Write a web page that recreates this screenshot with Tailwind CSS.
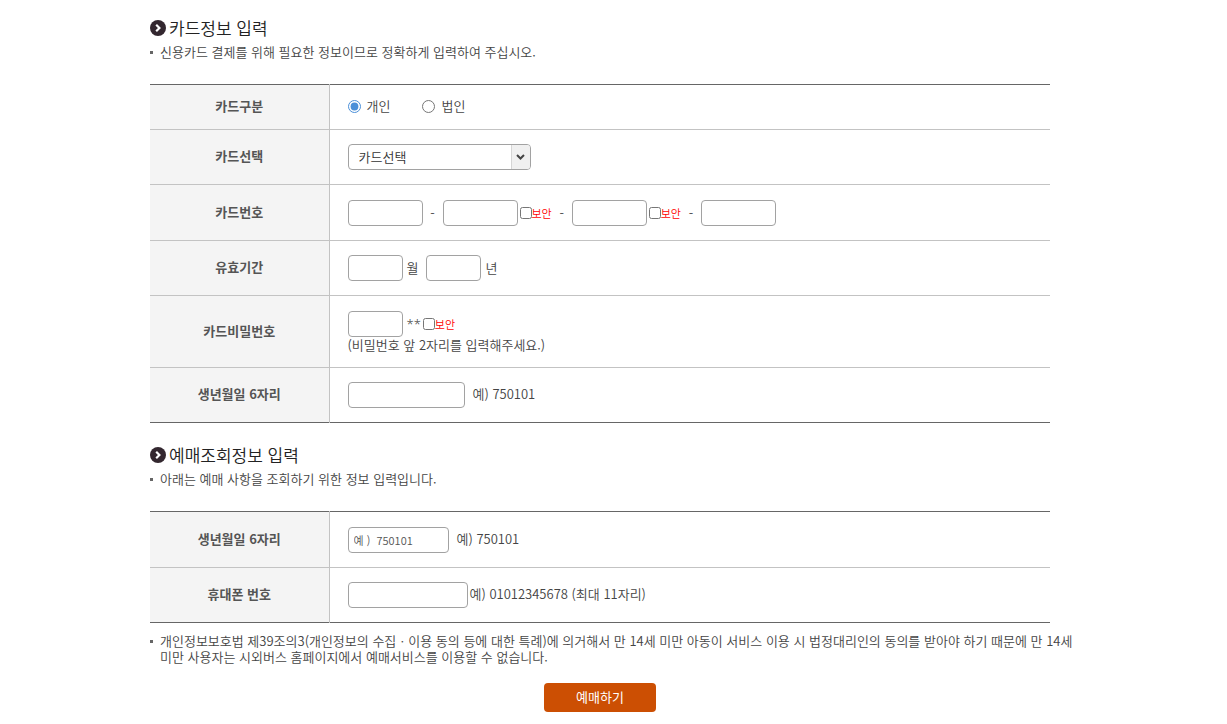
<!DOCTYPE html>
<html lang="ko">
<head>
  <meta charset="UTF-8" />
  <meta name="viewport" content="width=device-width, initial-scale=1.0" />
  <title>카드정보 입력</title>
  <script src="https://cdn.jsdelivr.net/npm/@tailwindcss/browser@4"></script>
</head>
<body class="bg-white font-['Noto_Sans_CJK_KR',sans-serif] text-[13px] leading-4 font-[350] text-[#444]">
  <form class="max-w-[1200px] px-[150px] pt-4 pb-3">

    <!-- 카드정보 -->
    <section>
      <h2 class="flex items-center gap-[3px] text-[17px] leading-6 font-[350] text-[#222]">
        <svg class="size-4" viewBox="0 0 16 16" fill="none"><circle cx="8" cy="8" r="8" fill="#33272f" /><path d="M6.2 4.8 9.4 8l-3.2 3.2" stroke="#fff" stroke-width="2.2" /></svg>
        카드정보 입력
      </h2>
      <p class="mt-1 flex gap-[7px]"><span class="mt-[7px] size-[3px] shrink-0 bg-[#666]"></span>신용카드 결제를 위해 필요한 정보이므로 정확하게 입력하여 주십시오.</p>

      <table class="mt-6 w-full border-y border-[#666]">
        <tbody>
          <tr class="h-[45px] border-b border-[#c3c3c3]">
            <th class="w-[179px] border-r border-[#c3c3c3] bg-[#f4f4f4] pb-0.5 text-[#555]">카드구분</th>
            <td class="px-[18px] pb-0.5">
              <div class="flex items-center gap-8">
                <label class="flex items-center gap-1.5"><input type="radio" name="cardType" checked class="size-[13px] accent-[#4a8fd8]" />개인</label>
                <label class="flex items-center gap-1.5"><input type="radio" name="cardType" class="size-[13px] accent-[#4a8fd8]" />법인</label>
              </div>
            </td>
          </tr>
          <tr class="h-[55px] border-b border-[#c3c3c3]">
            <th class="border-r border-[#c3c3c3] bg-[#f4f4f4] pb-0.5 text-[#555]"><label for="card">카드선택</label></th>
            <td class="px-[18px]">
              <div class="relative w-[183px]">
                <select id="card" class="block h-[26px] w-full appearance-none rounded border border-[#a2a2a2] pl-2.5 text-[#333]">
                  <option>카드선택</option>
                </select>
                <span class="pointer-events-none absolute inset-y-px right-px flex w-[19px] items-center justify-center rounded-r-[3px] border-l border-[#d5d5d5] bg-[#f0f0f0]">
                  <svg class="h-[6px] w-[9px]" viewBox="0 0 9 6" fill="none"><path d="m1 1 3.5 3.5L8 1" stroke="#444" stroke-width="2" /></svg>
                </span>
              </div>
            </td>
          </tr>
          <tr class="h-14 border-b border-[#c3c3c3]">
            <th class="border-r border-[#c3c3c3] bg-[#f4f4f4] pb-0.5 text-[#555]">카드번호</th>
            <td class="px-[18px]">
              <div class="flex items-center">
                <input type="text" aria-label="카드번호 1" class="h-[26px] w-[75px] rounded border border-[#a2a2a2] px-1.5" />
                <span class="w-5 text-center">-</span>
                <input type="text" aria-label="카드번호 2" class="h-[26px] w-[75px] rounded border border-[#a2a2a2] px-1.5" />
                <label class="ml-0.5 flex items-center text-[11px] text-[#f00]"><input type="checkbox" class="size-3" />보안</label>
                <span class="w-5 text-center">-</span>
                <input type="text" aria-label="카드번호 3" class="h-[26px] w-[75px] rounded border border-[#a2a2a2] px-1.5" />
                <label class="ml-0.5 flex items-center text-[11px] text-[#f00]"><input type="checkbox" class="size-3" />보안</label>
                <span class="w-5 text-center">-</span>
                <input type="text" aria-label="카드번호 4" class="h-[26px] w-[75px] rounded border border-[#a2a2a2] px-1.5" />
              </div>
            </td>
          </tr>
          <tr class="h-[55px] border-b border-[#c3c3c3]">
            <th class="border-r border-[#c3c3c3] bg-[#f4f4f4] pb-0.5 text-[#555]">유효기간</th>
            <td class="px-[18px]">
              <div class="flex items-center">
                <input type="text" id="month" class="h-[26px] w-[55px] rounded border border-[#a2a2a2] px-1.5" />
                <label for="month" class="ml-1">월</label>
                <input type="text" id="year" class="ml-2 h-[26px] w-[55px] rounded border border-[#a2a2a2] px-1.5" />
                <label for="year" class="ml-1">년</label>
              </div>
            </td>
          </tr>
          <tr class="h-[72px] border-b border-[#c3c3c3]">
            <th class="border-r border-[#c3c3c3] bg-[#f4f4f4] pb-0.5 text-[#555]"><label for="password">카드비밀번호</label></th>
            <td class="px-[18px]">
              <div class="flex items-center">
                <input type="password" id="password" class="h-[26px] w-[55px] rounded border border-[#a2a2a2] px-1.5" />
                <span class="ml-1 font-['Noto_Sans',sans-serif]">**</span>
                <label class="ml-0.5 flex items-center text-[11px] text-[#f00]"><input type="checkbox" class="size-3" />보안</label>
              </div>
              <p>(비밀번호 앞 2자리를 입력해주세요.)</p>
            </td>
          </tr>
          <tr class="h-[55px]">
            <th class="border-r border-[#c3c3c3] bg-[#f4f4f4] pb-0.5 text-[#555]"><label for="birth">생년월일 6자리</label></th>
            <td class="px-[18px]">
              <div class="flex items-center gap-2">
                <input type="text" id="birth" class="h-[26px] w-[117px] rounded border border-[#a2a2a2] px-1.5" />
                <span class="pb-0.5">예) 750101</span>
              </div>
            </td>
          </tr>
        </tbody>
      </table>
    </section>

    <!-- 예매조회정보 -->
    <section class="mt-5">
      <h2 class="flex items-center gap-[3px] text-[17px] leading-6 font-[350] text-[#222]">
        <svg class="size-4" viewBox="0 0 16 16" fill="none"><circle cx="8" cy="8" r="8" fill="#33272f" /><path d="M6.2 4.8 9.4 8l-3.2 3.2" stroke="#fff" stroke-width="2.2" /></svg>
        예매조회정보 입력
      </h2>
      <p class="mt-1 flex gap-[7px]"><span class="mt-[7px] size-[3px] shrink-0 bg-[#666]"></span>아래는 예매 사항을 조회하기 위한 정보 입력입니다.</p>

      <table class="mt-6 w-full border-y border-[#666]">
        <tbody>
          <tr class="h-14 border-b border-[#c3c3c3]">
            <th class="w-[179px] border-r border-[#c3c3c3] bg-[#f4f4f4] pb-0.5 text-[#555]"><label for="lookupBirth">생년월일 6자리</label></th>
            <td class="px-[18px]">
              <div class="flex items-center gap-2">
                <input type="text" id="lookupBirth" placeholder="예 )  750101" class="h-[26px] w-[101px] rounded border border-[#a2a2a2] px-[5px] text-[11px] placeholder:text-[#555]" />
                <span class="pb-0.5">예) 750101</span>
              </div>
            </td>
          </tr>
          <tr class="h-[55px]">
            <th class="border-r border-[#c3c3c3] bg-[#f4f4f4] pb-0.5 text-[#555]"><label for="phone">휴대폰 번호</label></th>
            <td class="px-[18px]">
              <div class="flex items-center gap-0.5">
                <input type="tel" id="phone" class="h-[26px] w-[120px] rounded border border-[#a2a2a2] px-1.5" />
                <span class="pb-0.5">예) 01012345678 (최대 11자리)</span>
              </div>
            </td>
          </tr>
        </tbody>
      </table>
      <p class="-mr-6 mt-2.5 flex gap-[7px]"><span class="mt-[7px] size-[3px] shrink-0 bg-[#666]"></span>개인정보보호법 제39조의3(개인정보의 수집ㆍ이용 동의 등에 대한 특례)에 의거해서 만 14세 미만 아동이 서비스 이용 시 법정대리인의 동의를 받아야 하기 때문에 만 14세 미만 사용자는 시외버스 홈페이지에서 예매서비스를 이용할 수 없습니다.</p>
    </section>

    <div class="mt-[18px] flex justify-center">
      <button type="submit" class="h-[29px] w-28 rounded bg-[#cc4f03] pb-0.5 font-normal text-white">예매하기</button>
    </div>
  </form>
</body>
</html>
